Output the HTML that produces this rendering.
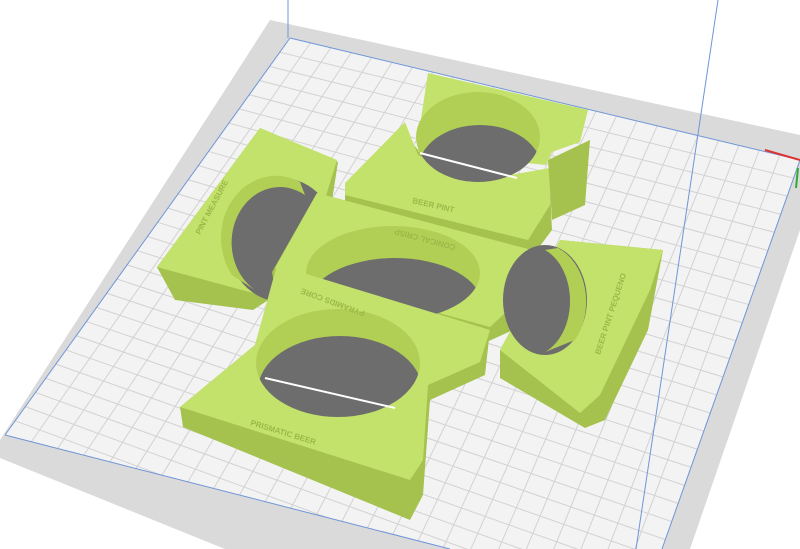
<!DOCTYPE html>
<html><head><meta charset="utf-8"><style>
html,body{margin:0;padding:0;background:#fff;width:800px;height:549px;overflow:hidden}
svg{display:block}
text{font-family:"Liberation Sans",sans-serif;font-size:8px;fill:#9bb848;font-weight:bold}
</style></head><body>
<svg id="s" width="800" height="549" viewBox="0 0 800 549">
<defs>
<clipPath id="cl"><polygon points="290,38 800,160 662,549 450,549 5,435"/></clipPath>
<clipPath id="hT"><ellipse cx="478" cy="137" rx="62" ry="45"/></clipPath>
<clipPath id="hM"><ellipse cx="393" cy="273" rx="87" ry="47"/></clipPath>
<clipPath id="hB"><ellipse cx="338" cy="363" rx="82" ry="54"/></clipPath>
<clipPath id="hL"><ellipse cx="282" cy="240" rx="55" ry="62"/></clipPath>
</defs>
<polygon points="270,20 800,135 800,230 690,549 225,549 0,458 0,440" fill="#dadada"/>
<polygon points="290,38 800,160 662,549 450,549 5,435" fill="#f3f3f3"/>
<g id="grid" stroke="#d2d2d2" stroke-width="1" clip-path="url(#cl)"></g>
<line x1="290" y1="38" x2="5" y2="435" stroke="#6f95d8" stroke-width="1"/>
<line x1="290" y1="38" x2="800" y2="160" stroke="#6f95d8" stroke-width="1"/>
<line x1="5" y1="435" x2="450" y2="549" stroke="#6f95d8" stroke-width="1"/>
<line x1="800" y1="160" x2="662" y2="549" stroke="#6f95d8" stroke-width="1"/>
<line x1="288" y1="0" x2="288" y2="38" stroke="#6f95d8" stroke-width="1"/>
<line x1="718" y1="0" x2="636" y2="549" stroke="#6f95d8" stroke-width="1"/>
<line x1="765" y1="150" x2="800" y2="160" stroke="#d33" stroke-width="2"/>
<line x1="798" y1="168" x2="796" y2="188" stroke="#3a3" stroke-width="2"/>

<!-- middle upper piece -->
<polygon points="345,185 400,128 418,150 470,185 550,190 552,230 528,262 345,215" fill="#a5c24e"/>
<polygon points="345,183 405,122 418,155 470,182 550,168 550,205 528,240 345,195" fill="#c3e26c"/>
<text x="412" y="203" transform="rotate(13 412 203)">BEER PINT</text>

<!-- top piece -->
<polygon points="548,160 590,140 585,205 552,220" fill="#a5c24e"/>
<polygon points="428,73 588,110 580,142 552,152 546,165 418,152 420,125" fill="#c3e26c"/>
<ellipse cx="478" cy="137" rx="62" ry="45" fill="#b2cf55"/>
<ellipse cx="480" cy="170" rx="62" ry="45" fill="#6d6d6d" clip-path="url(#hT)"/>
<line x1="420" y1="153" x2="517" y2="178" stroke="#fff" stroke-width="2"/>

<!-- left piece -->
<polygon points="157,267 260,128 338,162 322,265 253,310 175,300" fill="#a5c24e"/>
<polygon points="157,267 260,128 337,160 317,225 253,293" fill="#c3e26c"/>
<ellipse cx="282" cy="240" rx="55" ry="62" fill="#6d6d6d"/>
<path d="M232,275 A55,62 0 0 1 300,182 L305,195 A48,55 0 0 0 255,290 Z" fill="#b2cf55"/>
<text x="200" y="235" transform="rotate(-62 200 235)">PINT MEASURE</text>

<!-- middle piece -->
<polygon points="317,193 543,253 535,320 480,345 275,290 272,272" fill="#a5c24e"/>
<polygon points="317,193 543,253 530,290 490,327 275,268" fill="#c3e26c"/>
<ellipse cx="393" cy="273" rx="87" ry="47" fill="#b2cf55"/>
<ellipse cx="395" cy="305" rx="87" ry="47" fill="#6d6d6d" clip-path="url(#hM)"/>
<text x="380" y="215" transform="rotate(195 420 225)">CONICAL CRISP</text>

<!-- right piece -->
<polygon points="500,350 560,240 663,250 648,330 605,420 585,428 500,378" fill="#a5c24e"/>
<polygon points="500,350 560,240 663,250 650,290 600,395 580,413" fill="#c3e26c"/>
<ellipse cx="545" cy="300" rx="42" ry="55" fill="#6d6d6d"/>
<path d="M558,248 A45,58 0 0 1 575,340 L545,352 A40,55 0 0 0 545,250 Z" fill="#b2cf55"/>
<text x="600" y="355" transform="rotate(-72 600 355)">BEER PINT PEQUENO</text>

<!-- bottom piece -->
<polygon points="180,407 255,345 277,267 490,330 485,375 430,400 423,495 410,520 183,427" fill="#a5c24e"/>
<polygon points="180,407 255,345 277,265 490,330 480,362 428,385 423,460 410,480" fill="#c3e26c"/>
<ellipse cx="338" cy="363" rx="82" ry="54" fill="#b2cf55"/>
<ellipse cx="340" cy="390" rx="82" ry="54" fill="#6d6d6d" clip-path="url(#hB)"/>
<line x1="265" y1="378" x2="395" y2="408" stroke="#fff" stroke-width="2"/>
<text x="250" y="425" transform="rotate(17 250 425)">PRISMATIC BEER</text>
<text x="330" y="285" transform="rotate(200 350 295)">PYRAMIDS CORE</text>
</svg>
<script>
var g=document.getElementById('grid'),ns='http://www.w3.org/2000/svg';
function L(a,b,c,d){var l=document.createElementNS(ns,'line');l.setAttribute('x1',a);l.setAttribute('y1',b);l.setAttribute('x2',c);l.setAttribute('y2',d);g.appendChild(l);}
var A=[290,38],B=[800,160],C=[620,666],D=[5,435];
function P(u,v){var x=(1-v)*((1-u)*A[0]+u*B[0])+v*((1-u)*D[0]+u*C[0]);var y=(1-v)*((1-u)*A[1]+u*B[1])+v*((1-u)*D[1]+u*C[1]);return [x,y];}
var N=25,M=28;
for(var i=1;i<N;i++){var u=i/N;var p=P(u,0),q=P(u,1);L(p[0],p[1],q[0],q[1]);}
for(var j=1;j<M;j++){var v=j/M;var p=P(0,v),q=P(1,v);L(p[0],p[1],q[0],q[1]);}
</script>
</body></html>
